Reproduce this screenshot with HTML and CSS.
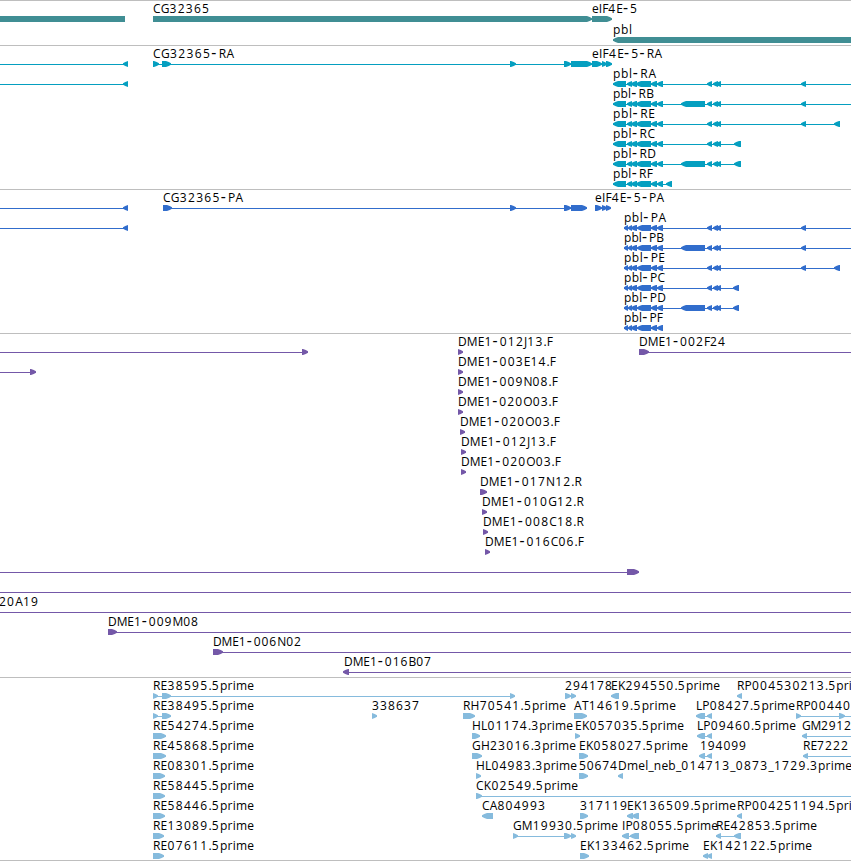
FILE: index.html
```
<!DOCTYPE html>
<html lang="en">
<head>
<meta charset="utf-8">
<title>Genome tracks</title>
<link rel="stylesheet" href="styles.css">
</head>
<body>
<main class="browser" id="browser"></main>
<script src="tracks.js"></script>
</body>
</html>
```
FILE: styles.css
```
body {
  margin: 0;
  background: #fff;
  overflow: hidden;
}

.browser {
  display: flex;
  flex-direction: column;
  width: 851px;
  height: 861px;
  overflow: hidden;
}

.track {
  display: flex;
  flex-direction: column;
  border-top: 1px solid #bebebe;
  padding-bottom: 3px;
}

.row {
  display: block;
  flex: none;
  width: 851px;
  height: 20px;
  overflow: visible;
}

.gene { color: #408e94; padding-bottom: 2px; }
.gene .row { height: 21px; }
.transcript { color: #059fc0; }
.protein { color: #316dcc; }
.bac { color: #7458a8; }
.est {
  color: #86bbdd;
  padding-bottom: 2px;
  border-bottom: 1px solid #bebebe;
}

.feature { fill: currentColor; }
.intron { shape-rendering: crispEdges; }

.label {
  fill: #000;
  font-family: "Open Sans", "Noto Sans", sans-serif;
  font-size: 12px;
}

.digits { letter-spacing: 1.1px; }
.dash {
  font-family: "DejaVu Sans Mono", monospace;
  font-size: 15px;
}
```
FILE: tracks.js
```
const EDGE = 860;
const NS = "http://www.w3.org/2000/svg";

// Labels: [text, start, end].
// Features: [direction, exons, line start, line end]; the line defaults to the exon span.
const heads = [[613, 626], [627, 632], [631, 637], [636, 651], [651, 657], [657, 663]];
const cds = [[624, 628], [628, 632], [631, 637], [637, 651], [651, 657], [657, 663]];
const mid = [[707, 712], [713, 718], [716, 721]];
const big = [[681, 705]];
const far = [[801, 806]];
const leftEnd = ["<", [[123, 128]], 0];

const tracks = [
  { kind: "gene", rows: [
    { labels: [["CG32365", 153, 210], ["eIF4E-5", 592, 638]],
      features: [["", [[0, 125]]], [">", [[153, 592]]], [">", [[592, 612]]]] },
    { labels: [["pbl", 613, 632]], features: [["<", [[613, EDGE]]]] }
  ] },
  { kind: "transcript", rows: [
    { labels: [["CG32365-RA", 153, 234], ["eIF4E-5-RA", 592, 662]],
      features: [leftEnd, [">", [[153, 159], [162, 171], [510, 516], [564, 571], [571, 592]]],
        [">", [[592, 602], [602, 607], [606, 612]]]] },
    { labels: [["pbl-RA", 613, 656]], features: [leftEnd, ["<", [...heads, ...mid, ...far], 613, EDGE]] },
    { labels: [["pbl-RB", 613, 654]], features: [["<", [...heads, ...big, ...mid, ...far], 613, EDGE]] },
    { labels: [["pbl-RE", 613, 655]], features: [["<", [...heads, ...mid, ...far, [834, 840]]]] },
    { labels: [["pbl-RC", 613, 655]], features: [["<", [...heads, ...mid, [734, 741]]]] },
    { labels: [["pbl-RD", 613, 656]], features: [["<", [...heads, ...big, ...mid, [734, 741]]]] },
    { labels: [["pbl-RF", 613, 653]], features: [["<", [...heads, [666, 672]]]] }
  ] },
  { kind: "protein", rows: [
    { labels: [["CG32365-PA", 163, 243], ["eIF4E-5-PA", 595, 664]],
      features: [leftEnd, [">", [[163, 172], [510, 516], [564, 571], [571, 587]]],
        [">", [[595, 602], [602, 607], [606, 611]]]] },
    { labels: [["pbl-PA", 624, 666]], features: [leftEnd, ["<", [...cds, ...mid, ...far], 624, EDGE]] },
    { labels: [["pbl-PB", 624, 664]], features: [["<", [...cds, ...big, ...mid, ...far], 624, EDGE]] },
    { labels: [["pbl-PE", 624, 665]], features: [["<", [...cds, ...mid, ...far, [834, 840]]]] },
    { labels: [["pbl-PC", 624, 665]], features: [["<", [...cds, ...mid, [733, 739]]]] },
    { labels: [["pbl-PD", 624, 666]], features: [["<", [...cds, ...big, ...mid, [733, 739]]]] },
    { labels: [["pbl-PF", 624, 663]], features: [["<", cds]] }
  ] },
  { kind: "bac", rows: [
    { labels: [["DME1-012J13.F", 458, 553], ["DME1-002F24", 639, 726]],
      features: [[">", [[302, 308]], 0], [">", [[458, 463]]], [">", [[639, 649]], 639, EDGE]] },
    { labels: [["DME1-003E14.F", 458, 556]], features: [[">", [[30, 36]], 0], [">", [[458, 463]]]] },
    { labels: [["DME1-009N08.F", 458, 558]], features: [[">", [[458, 463]]]] },
    { labels: [["DME1-020O03.F", 458, 558]], features: [[">", [[458, 463]]]] },
    { labels: [["DME1-020O03.F", 460, 560]], features: [[">", [[460, 465]]]] },
    { labels: [["DME1-012J13.F", 461, 556]], features: [[">", [[461, 466]]]] },
    { labels: [["DME1-020O03.F", 461, 561]], features: [[">", [[461, 466]]]] },
    { labels: [["DME1-017N12.R", 480, 582]], features: [[">", [[480, 487]]]] },
    { labels: [["DME1-010G12.R", 482, 584]], features: [[">", [[482, 487]]]] },
    { labels: [["DME1-008C18.R", 483, 584]], features: [[">", [[483, 488]]]] },
    { labels: [["DME1-016C06.F", 485, 584]], features: [[">", [[485, 490]]]] },
    { labels: [], features: [[">", [[627, 639]], 0]] },
    { labels: [], features: [["", [], 0, EDGE]] },
    { labels: [["20A19", -1, 39]], features: [["", [], 0, EDGE]] },
    { labels: [["DME1-009M08", 108, 199]], features: [[">", [[108, 117]], 108, EDGE]] },
    { labels: [["DME1-006N02", 213, 302]], features: [[">", [[213, 223]], 213, EDGE]] },
    { labels: [["DME1-016B07", 344, 432]], features: [["<", [[343, 349]], 344, EDGE]] }
  ] },
  { kind: "est", rows: [
    { labels: [["RE38595.5prime", 153, 254], ["294178", 565, 613], ["EK294550.5prime", 611, 720], ["RP004530213.5prime", 737, 870]],
      features: [[">", [[153, 158], [162, 171], [510, 515]]], [">", [[565, 571], [571, 576]]], ["<", [[611, 619]]], ["<", [[737, 742]]]] },
    { labels: [["RE38495.5prime", 153, 254], ["338637", 372, 420], ["RH70541.5prime", 463, 566], ["AT14619.5prime", 574, 676], ["LP08427.5prime", 696, 795], ["RP00440", 796, 851]],
      features: [[">", [[153, 158], [162, 171]]], [">", [[372, 377]]], [">", [[463, 475]]], [">", [[574, 587]]], ["<", [[696, 705], [707, 712]]], [">", [[796, 801], [839, 845]], 796, EDGE]] },
    { labels: [["RE54274.5prime", 153, 254], ["HL01174.3prime", 472, 573], ["EK057035.5prime", 575, 684], ["LP09460.5prime", 697, 796], ["GM2912", 802, 852]],
      features: [[">", [[153, 166]]], [">", [[472, 480]]], [">", [[575, 580]]], ["<", [[697, 705], [707, 712]]], ["<", [[802, 807]], 802, EDGE]] },
    { labels: [["RE45868.5prime", 153, 254], ["GH23016.3prime", 472, 576], ["EK058027.5prime", 579, 688], ["194099", 700, 747], ["RE7222", 803, 849]],
      features: [[">", [[153, 166]]], [">", [[472, 482]]], [">", [[579, 588]]], ["<", [[699, 705], [707, 712]]], ["<", [[803, 808]], 803, EDGE]] },
    { labels: [["RE08301.5prime", 153, 254], ["HL04983.3prime", 476, 577], ["50674", 579, 618], ["Dmel_neb_014713_0873_1729.3prime", 618, 852]],
      features: [[">", [[153, 165]]], [">", [[476, 481]]], [">", [[579, 588]]], ["<", [[618, 623]]]] },
    { labels: [["RE58445.5prime", 153, 254], ["CK02549.5prime", 476, 578]],
      features: [[">", [[153, 165]]], [">", [[476, 482]], 476, EDGE]] },
    { labels: [["RE58446.5prime", 153, 254], ["CA804993", 482, 546], ["317119", 580, 628], ["EK136509.5prime", 627, 736], ["RP004251194.5prime", 737, 870]],
      features: [[">", [[153, 165]]], ["<", [[482, 493]]], [">", [[580, 588]]], ["<", [[627, 633], [632, 639]]], ["<", [[737, 742]]]] },
    { labels: [["RE13089.5prime", 153, 254], ["GM19930.5prime", 513, 618], ["IP08055.5prime", 622, 718], ["RE42853.5prime", 716, 817]],
      features: [[">", [[153, 164]]], [">", [[513, 518], [564, 571], [571, 576]]], ["<", [[622, 629], [630, 639]]], ["<", [[716, 721], [734, 741]]]] },
    { labels: [["RE07611.5prime", 153, 254], ["EK133462.5prime", 580, 689], ["EK142122.5prime", 703, 812]],
      features: [[">", [[153, 164]]], [">", [[580, 589]]], ["<", [[703, 708], [707, 712]]]] }
  ] }
];

function node(name, attrs, parent) {
  const el = document.createElementNS(NS, name);
  for (const key in attrs) el.setAttribute(key, attrs[key]);
  parent.appendChild(el);
  return el;
}

// Blunt arrow head, six pixels tall and up to five long.
function exonPoints(dir, a, b) {
  const h = Math.min(5, b - a);
  const m = h * 0.45;
  if (dir === ">") return `${a},15 ${b - h},15 ${b - m},16 ${b},17.2 ${b},18.8 ${b - m},20 ${b - h},21 ${a},21`;
  if (dir === "<") return `${b},15 ${a + h},15 ${a + m},16 ${a},17.2 ${a},18.8 ${a + m},20 ${a + h},21 ${b},21`;
  return `${a},15 ${b},15 ${b},21 ${a},21`;
}

function drawFeature(svg, [dir, exons, from, to]) {
  const g = node("g", { class: "feature" }, svg);
  const start = from ?? exons[0][0];
  const end = to ?? exons[exons.length - 1][1];
  node("rect", { class: "intron", x: start, y: 18, width: end - start, height: 1 }, g);
  for (const [a, b] of exons) node("polygon", { points: exonPoints(dir, a, b) }, g);
}

function drawLabel(svg, [text, start, end]) {
  const el = node("text", { class: "label", x: start, y: 12, textLength: end - start }, svg);
  for (const part of text.match(/\d+|-|[^\d-]+/g)) {
    const kind = /\d/.test(part) ? "digits" : part === "-" ? "dash" : "letters";
    // Pull the wide dash, and what follows it, close to the neighbouring glyphs.
    const attrs = kind === "dash" ? { class: kind, dx: -2 } : { class: kind };
    node("tspan", attrs, el).textContent = part;
  }
}

for (const { kind, rows } of tracks) {
  const section = document.createElement("section");
  section.className = `track ${kind}`;
  for (const { labels, features } of rows) {
    const svg = node("svg", { class: "row" }, section);
    features.forEach(f => drawFeature(svg, f));
    labels.forEach(l => drawLabel(svg, l));
  }
  document.getElementById("browser").appendChild(section);
}
```
